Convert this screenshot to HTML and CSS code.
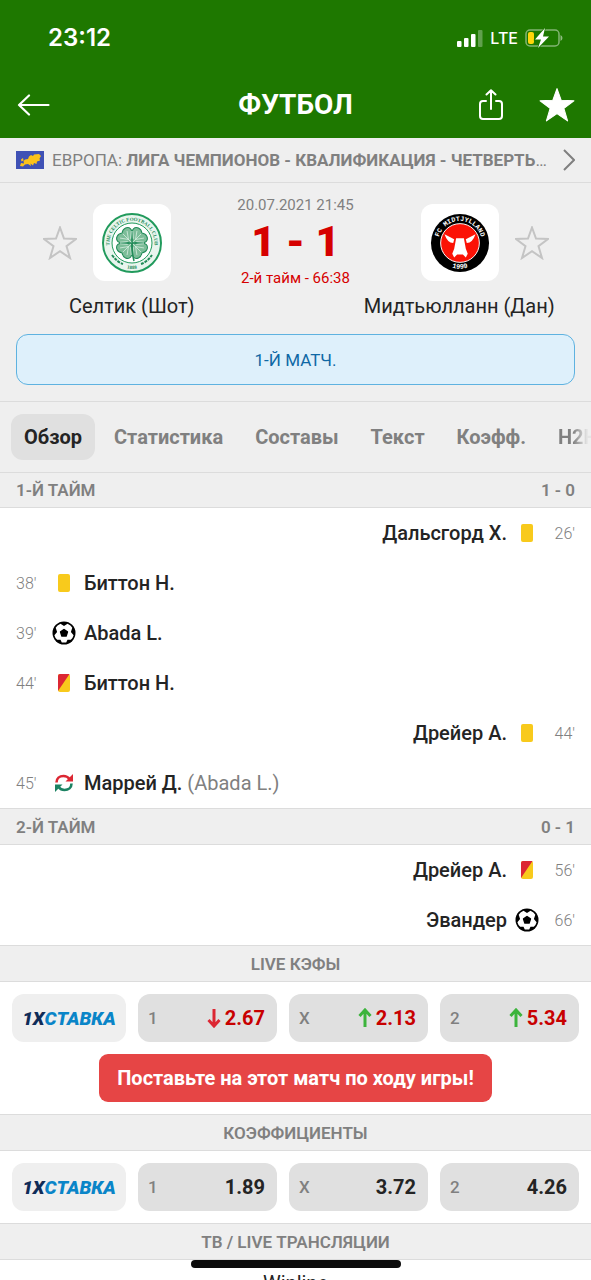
FILE: index.html
```html
<!DOCTYPE html>
<html lang="ru">
<head>
<meta charset="utf-8">
<meta name="viewport" content="width=device-width, initial-scale=1">
<title>Футбол</title>
<link rel="stylesheet" href="styles.css">
</head>
<body>
<svg class="defs" aria-hidden="true">
  <defs>
    <symbol id="star" viewBox="0 0 34 34"><path d="M17 1.5 21 12.6 33 13 23.5 20.2 27 32 17 25.2 7 32 10.500 20.200 1 13 13 12.600Z"/></symbol>
    <symbol id="ball" viewBox="0 0 24 24">
      <circle cx="12" cy="12" r="11.500" fill="#000"/>
      <path d="M12 5 15.500 2.800Q19 4.200 20.300 6.800L18.900 11 21.600 14.200Q20.900 17 18.800 18.800L15.500 18.800 14.200 21.400H9.800L8.500 18.800 5.200 18.800Q3 16.900 2.400 14.200L5.100 11 3.700 6.800Q5 4.200 8.500 2.800Z" fill="#fff"/>
      <path d="M12 8.500 15.400 10.900 14.100 14.900H9.900L8.600 10.900Z" fill="#000" stroke="#000" stroke-width="1.500" stroke-linejoin="round"/>
    </symbol>
    <symbol id="yellow" viewBox="0 0 12 18"><rect width="12" height="18" rx="2" fill="#f8ca1c"/></symbol>
    <symbol id="second-yellow" viewBox="0 0 12 18"><rect width="12" height="18" rx="2" fill="#f8ca1c"/><path d="M2 0H11.500L0 17V2Q0 0 2 0Z" fill="#dc2733"/></symbol>
    <symbol id="swap" viewBox="0 0 18 18">
      <path d="M1.500 8.500C1.500 4.500 4.500 2 8.500 2 11 2 13 3 14.500 5" fill="none" stroke="#dc2733" stroke-width="2.600"/><path d="M18 0V7.500H10.500Z" fill="#dc2733"/>
      <path d="M16.500 9.500C16.500 13.500 13.500 16 9.500 16 7 16 5 15 3.500 13" fill="none" stroke="#1b8262" stroke-width="2.600"/><path d="M0 18V10.500H7.500Z" fill="#1b8262"/>
    </symbol>
    <symbol id="arrow" viewBox="0 0 14 20"><path d="M7 19V2M1.500 8 7 2 12.500 8" fill="none" stroke="currentColor" stroke-width="3"/></symbol>
    <g id="leaf"><path d="M0 0C-3-5-9-7-9-11-9-15-4-17 0-14 4-17 9-15 9-11 9-7 3-5 0 0Z" fill="#7dbd99" stroke="#218b58" stroke-width="1"/><path d="M0-1V-13M0-5-5-12M0-5 5-12M-2-4-8-9M2-4 8-9" fill="none" stroke="#dff1e7" stroke-width=".7"/></g>
  </defs>
</svg>
<div class="app">
  <header class="top">
    <div class="status">
      <span class="clock">23:12</span>
      <div class="status-icons">
        <svg width="26" height="17" viewBox="0 0 26 17" fill="#fff"><rect y="11" width="4.500" height="6" rx="1"/><rect x="7" y="8" width="4.500" height="9" rx="1"/><rect x="14" y="4" width="4.500" height="13" rx="1"/><rect x="21" width="4.500" height="17" rx="1" opacity=".3"/></svg>
        <span>LTE</span>
        <svg width="38" height="20" viewBox="0 0 38 20"><rect x="1" y="2" width="33" height="16" rx="4" fill="none" stroke="#fff" stroke-opacity=".45" stroke-width="1.500"/><path d="M35.500 7Q37.500 8 37.500 10T35.500 13Z" fill="#fff" opacity=".5"/><rect x="3" y="4" width="6" height="12" rx="2" fill="#ffd60a"/><path d="M20 0 10 11.500H16L13 20 24 8.500H18Z" fill="#fff" stroke="#1e7800" stroke-width="1.500" paint-order="stroke"/></svg>
      </div>
    </div>
    <div class="nav">
      <button class="icon-btn back" aria-label="Назад"><svg width="34" height="22" viewBox="0 0 34 22" fill="none" stroke="#fff" stroke-width="2.200" stroke-linecap="round" stroke-linejoin="round"><path d="M13 1.500 3 11 13 20.500M3 11H32.500"/></svg></button>
      <h1>ФУТБОЛ</h1>
      <div class="nav-actions">
        <button class="icon-btn" aria-label="Поделиться"><svg width="26" height="32" viewBox="0 0 26 32" fill="none" stroke="#fff" stroke-width="2" stroke-linecap="round" stroke-linejoin="round"><path d="M8 12H5Q2 12 2 15V27Q2 30 5 30H21Q24 30 24 27V15Q24 12 21 12H18M13 20V1.500M8.500 5.500 13 1.200 17.500 5.500"/></svg></button>
        <button class="icon-btn" aria-label="Избранное"><svg class="star solid" width="36" height="36"><use href="#star"/></svg></button>
      </div>
    </div>
  </header>

  <main>
    <a class="league" href="#">
      <svg width="28" height="18" viewBox="0 0 28 18"><rect width="28" height="18" fill="#3f51b5"/><path d="M4 15 5 12 8 12.500 7.500 10 9 8.500 12 8 13 5.500 15 4 17 5 18 3.500 23 3 25 5 23.500 7.500 24 9.500 21 10.500 20.500 13 18 12 17 14.500 14.500 12.500 15 15 12 13 9 13.500 7 15.500ZM5 8.500 7 7 7.500 9.500 5.500 10.500Z" fill="#fcc21b"/></svg>
      <span class="league-name">ЕВРОПА: <b>ЛИГА ЧЕМПИОНОВ - КВАЛИФИКАЦИЯ - ЧЕТВЕРТЬФИНАЛ</b></span>
      <svg width="12" height="22" viewBox="0 0 12 22" fill="none" stroke="#808080" stroke-width="2"><path d="M1 1 11 11 1 21"/></svg>
    </a>

    <section class="match">
      <div class="teams">
        <div class="team home">
          <div class="team-row">
            <button class="icon-btn" aria-label="Добавить Селтик"><svg class="star" width="34" height="34"><use href="#star"/></svg></button>
            <div class="crest"><svg width="62" height="62" viewBox="0 0 62 62">
              <defs><path id="c1" d="M9.500 38A22.500 22.500 0 1 1 52.500 38"/><path id="c2" d="M18 54Q31 60 44 54"/></defs>
              <circle cx="31" cy="31" r="29" fill="#e9f5ee" stroke="#219a5c" stroke-width="2"/><circle cx="31" cy="31" r="20" fill="#fff" stroke="#219a5c"/>
              <text class="celtic-ring"><textPath href="#c1" startOffset="50%" text-anchor="middle">THE CELTIC FOOTBALL CLUB</textPath></text>
              <text class="celtic-ring"><textPath href="#c2" startOffset="50%" text-anchor="middle">1888</textPath></text>
              <path d="M11 43Q16 50 22 52M40 52Q46 50 51 43" fill="none" stroke="#218b58" stroke-width="2" stroke-dasharray="3 1"/>
              <g transform="translate(31 31)"><use href="#leaf" transform="rotate(45)"/><use href="#leaf" transform="rotate(135)"/><use href="#leaf" transform="rotate(225)"/><use href="#leaf" transform="rotate(315)"/><path d="M0 0Q0 10 2 18" stroke="#218b58" stroke-width="1.500" fill="none"/></g>
            </svg></div>
          </div>
          <div class="team-name">Селтик (Шот)</div>
        </div>
        <div class="score-box">
          <div class="date">20.07.2021 21:45</div>
          <div class="score">1 - 1</div>
          <div class="stage">2-й тайм - 66:38</div>
        </div>
        <div class="team away">
          <div class="team-row">
            <div class="crest"><svg width="60" height="60" viewBox="0 0 62 62">
              <defs><path id="m1" d="M10.500 40A22.500 22.500 0 1 1 51.500 40"/><path id="m2" d="M16 53Q31 62 46 53"/></defs>
              <circle cx="31" cy="31" r="30" fill="#000"/><circle cx="31" cy="31" r="20" fill="#fb1206" stroke="#fff"/>
              <text class="mid-ring"><textPath href="#m1" startOffset="50%" text-anchor="middle">FC MIDTJYLLAND</textPath></text>
              <text class="mid-ring"><textPath href="#m2" startOffset="50%" text-anchor="middle">1999</textPath></text>
              <path d="M15 22 25 27 24 31Q18 31 15 22ZM47 22 37 27 38 31Q44 31 47 22ZM27 26H35L37 37 39 42 37 46 34 43H28L25 46 23 42 25 37Z" fill="#fff"/>
            </svg></div>
            <button class="icon-btn" aria-label="Добавить Мидтьюлланн"><svg class="star" width="34" height="34"><use href="#star"/></svg></button>
          </div>
          <div class="team-name">Мидтьюлланн (Дан)</div>
        </div>
      </div>
      <div class="note">1-Й МАТЧ.</div>
    </section>

    <nav class="tabs">
      <button class="tab active">Обзор</button><button class="tab">Статистика</button><button class="tab">Составы</button><button class="tab">Текст</button><button class="tab">Коэфф.</button><button class="tab">H2H</button>
    </nav>

    <h2 class="bar"><span>1-Й ТАЙМ</span><span>1 - 0</span></h2>
    <ul class="events">
      <li class="event away"><span class="min">26'</span><span class="ico"><svg width="12" height="18"><use href="#yellow"/></svg></span><span class="who">Дальсгорд Х.</span></li>
      <li class="event"><span class="min">38'</span><span class="ico"><svg width="12" height="18"><use href="#yellow"/></svg></span><span class="who">Биттон Н.</span></li>
      <li class="event"><span class="min">39'</span><span class="ico"><svg width="24" height="24"><use href="#ball"/></svg></span><span class="who">Abada L.</span></li>
      <li class="event"><span class="min">44'</span><span class="ico"><svg width="12" height="18"><use href="#second-yellow"/></svg></span><span class="who">Биттон Н.</span></li>
      <li class="event away"><span class="min">44'</span><span class="ico"><svg width="12" height="18"><use href="#yellow"/></svg></span><span class="who">Дрейер А.</span></li>
      <li class="event"><span class="min">45'</span><span class="ico"><svg width="18" height="18"><use href="#swap"/></svg></span><span class="who">Маррей Д. <span class="sub">(Abada L.)</span></span></li>
    </ul>
    <h2 class="bar"><span>2-Й ТАЙМ</span><span>0 - 1</span></h2>
    <ul class="events">
      <li class="event away"><span class="min">56'</span><span class="ico"><svg width="12" height="18"><use href="#second-yellow"/></svg></span><span class="who">Дрейер А.</span></li>
      <li class="event away"><span class="min">66'</span><span class="ico"><svg width="24" height="24"><use href="#ball"/></svg></span><span class="who">Эвандер</span></li>
    </ul>

    <h2 class="bar center">LIVE КЭФЫ</h2>
    <div class="odds-block">
      <div class="odds">
        <a class="brand" href="#"><span class="dark">1X</span>СТАВКА</a>
        <button class="odd live"><span class="key">1</span><svg class="down" width="14" height="20"><use href="#arrow"/></svg><b>2.67</b></button>
        <button class="odd live"><span class="key">X</span><svg class="up" width="14" height="20"><use href="#arrow"/></svg><b>2.13</b></button>
        <button class="odd live"><span class="key">2</span><svg class="up" width="14" height="20"><use href="#arrow"/></svg><b>5.34</b></button>
      </div>
      <button class="cta">Поставьте на этот матч по ходу игры!</button>
    </div>
    <h2 class="bar center">КОЭФФИЦИЕНТЫ</h2>
    <div class="odds-block">
      <div class="odds">
        <a class="brand" href="#"><span class="dark">1X</span>СТАВКА</a>
        <button class="odd"><span class="key">1</span><b>1.89</b></button>
        <button class="odd"><span class="key">X</span><b>3.72</b></button>
        <button class="odd"><span class="key">2</span><b>4.26</b></button>
      </div>
    </div>
    <h2 class="bar center">ТВ / LIVE ТРАНСЛЯЦИИ</h2>
    <div class="channel">Winline</div>
  </main>
  <div class="home-indicator"></div>
</div>
</body>
</html>
```
FILE: styles.css
```css
* { box-sizing: border-box; }
body { margin: 0; font-family: Roboto, "Liberation Sans", sans-serif; color: #242424; background: #fff; }
button { font: inherit; color: inherit; border: 0; padding: 0; background: none; }
a { color: inherit; text-decoration: none; }
h1, h2, ul { margin: 0; padding: 0; list-style: none; }
svg { display: block; flex: none; }
.defs { position: absolute; width: 0; height: 0; }
.app { display: flex; flex-direction: column; height: 100vh; }
main { flex: 1; min-height: 0; overflow-y: auto; scrollbar-width: none; }

.top { background: #1e7800; color: #fff; }
.status { display: flex; justify-content: space-between; align-items: center; height: 72px; padding: 4px 28px 0 48px; }
.clock { font: 600 24px/32px Inter, sans-serif; }
.status-icons { display: flex; align-items: center; gap: 7px; font: 500 16px/24px Inter, sans-serif; }
.nav { display: grid; grid-template-columns: 1fr auto 1fr; align-items: center; height: 66px; padding: 0 16px; }
.back { justify-self: start; }
.nav h1 { font-size: 28px; line-height: 32px; font-weight: 700; }
.nav-actions { display: flex; justify-content: flex-end; align-items: center; gap: 35px; }
.star { fill: none; stroke: #c4c4c4; stroke-width: 2; overflow: visible; }
.star.solid { fill: #fff; stroke: #fff; stroke-width: 1; stroke-linejoin: round; }

.league { display: flex; align-items: center; gap: 8px; height: 45px; padding: 0 16px; background: #efefef; border-bottom: 1px solid #dcdcdc; color: #808080; font-size: 17px; }
.league-name { flex: 1; min-width: 0; overflow: hidden; white-space: nowrap; text-overflow: ellipsis; }

.match { padding: 10px 16px 16px; background: #efefef; border-bottom: 1px solid #dcdcdc; }
.teams { display: grid; grid-template-columns: 1fr auto 1fr; }
.team { display: flex; flex-direction: column; align-items: center; gap: 10px; padding-top: 11px; }
.team.home { padding-left: 12px; }
.team.away { padding-right: 12px; }
.team-row { display: flex; align-items: center; gap: 16px; }
.home .team-row { align-self: flex-end; margin-right: 65px; }
.away .team-row { align-self: flex-start; margin-left: 65px; }
.crest { display: grid; place-items: center; width: 78px; height: 77px; border-radius: 12px; background: #fff; }
.team-name { font-size: 20px; line-height: 30px; white-space: nowrap; }
.celtic-ring { font: 700 5px "Liberation Serif", serif; fill: #218b58; }
.mid-ring { font: 700 7px "Liberation Mono", monospace; fill: #fff; }
.score-box { text-align: center; width: 120px; }
.date { color: #808080; font-size: 15px; line-height: 24px; white-space: nowrap; }
.score { color: #d60000; font-size: 42px; line-height: 50px; font-weight: 900; white-space: nowrap; }
.stage { color: #d60000; font-size: 15px; line-height: 22px; white-space: nowrap; }
.note { margin-top: 13px; height: 51px; display: grid; place-items: center; border: 1px solid #5eb2e0; border-radius: 12px; background: #def0fb; color: #0f68a5; font-size: 17px; }

.tabs { display: flex; align-items: center; gap: 6px; height: 70px; padding: 0 11px; overflow: hidden; background: #efefef; }
.tab { flex: none; height: 46px; padding: 0 13px; border-radius: 12px; color: #808080; font-size: 20px; font-weight: 700; }
.tab.active { background: #e0e0e0; color: #242424; }
.tab:last-child { color: transparent; background: linear-gradient(to right, #808080 28px, #e4e4e4 42px); background-clip: text; -webkit-background-clip: text; }

.bar { display: flex; justify-content: space-between; align-items: center; height: 37px; padding: 0 16px; background: #efefef; border: solid #dcdcdc; border-width: 1px 0; color: #808080; font-size: 17px; font-weight: 600; }
.bar.center { justify-content: center; }
.tabs + .bar { height: 36px; }
.event { display: flex; align-items: center; height: 50px; padding: 0 16px; font-size: 20px; }
.event.away { flex-direction: row-reverse; }
.min { width: 36px; color: #808080; font-size: 16px; font-weight: 300; }
.away .min { text-align: right; }
.ico { display: grid; place-items: center; width: 24px; margin-right: 8px; }
.away .ico { margin: 0 0 0 8px; }
.who { font-weight: 500; }
.sub { color: #808080; font-weight: 400; }

.odds-block { display: flex; flex-direction: column; align-items: center; gap: 12px; padding: 12px; }
.odds { display: grid; grid-template-columns: 114px 1fr 1fr 1fr; gap: 12px; width: 100%; height: 48px; }
.brand { display: grid; grid-auto-flow: column; place-content: center; align-items: center; border-radius: 12px; background: #efefef; color: #0a85c8; font-size: 19px; font-weight: 900; font-style: italic; }
.dark { color: #0f2c58; }
.odd { display: flex; align-items: center; gap: 4px; padding: 0 12px 0 10px; border-radius: 12px; background: #e0e0e0; font-size: 20px; }
.key { margin-right: auto; color: #808080; font-size: 17px; font-weight: 500; }
.live b { color: #c80000; }
.down { color: #dc2733; transform: rotate(180deg); }
.up { color: #3cb43c; }
.cta { height: 48px; padding: 0 18px; border-radius: 9px; background: #e64545; color: #fff; font-size: 20px; font-weight: 700; }
.channel { padding: 9px; text-align: center; font-size: 20px; line-height: 28px; }
.home-indicator { position: fixed; bottom: 12px; left: 50%; width: 210px; height: 8px; border-radius: 4px; background: #0b0b0b; transform: translateX(-50%); }
```
